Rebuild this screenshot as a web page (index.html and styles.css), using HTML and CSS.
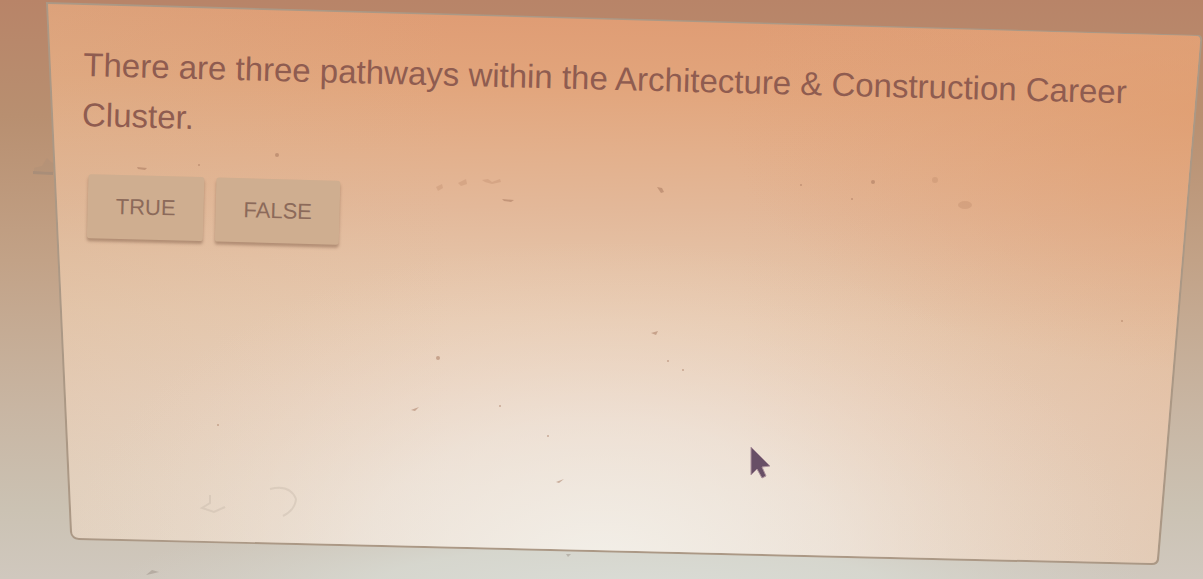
FILE: index.html
```
<!doctype html>
<html lang="en">

<head>
	<meta charset="utf-8" />
	<meta name="viewport" content="width=device-width, initial-scale=1">
	<title>Career Clusters Quiz</title>
	<link rel="stylesheet" href="styles.css">
</head>

<body>

	<main class="screen">

		<svg class="backdrop" viewBox="0 0 1203 579" preserveAspectRatio="none" aria-hidden="true">
			<defs>
				<linearGradient id="wall" x1="0" y1="0" x2="0" y2="1">
					<stop offset="0" stop-color="#b88468" />
					<stop offset="0.2" stop-color="#b88f70" />
					<stop offset="0.45" stop-color="#c2a287" />
					<stop offset="0.7" stop-color="#c8b5a2" />
					<stop offset="0.88" stop-color="#cbc2b3" />
					<stop offset="1" stop-color="#d0c8be" />
				</linearGradient>
				<radialGradient id="floor" gradientUnits="userSpaceOnUse" cx="0" cy="0" r="1" gradientTransform="translate(630 590) scale(520 90)">
					<stop offset="0" stop-color="#dadcd6" />
					<stop offset="0.5" stop-color="#d8dad2" stop-opacity="0.8" />
					<stop offset="1" stop-color="#d4d2c8" stop-opacity="0" />
				</radialGradient>
				<linearGradient id="paper" gradientUnits="userSpaceOnUse" x1="0" y1="0" x2="-12" y2="560">
					<stop offset="0" stop-color="#df9c74" />
					<stop offset="0.13" stop-color="#e2a57c" />
					<stop offset="0.25" stop-color="#e3b08c" />
					<stop offset="0.35" stop-color="#e3b899" />
					<stop offset="0.45" stop-color="#e5c2a6" />
					<stop offset="0.55" stop-color="#e7cab1" />
					<stop offset="0.7" stop-color="#e8d2c0" />
					<stop offset="0.85" stop-color="#e7d9cb" />
					<stop offset="1" stop-color="#e6ddd2" />
				</linearGradient>
				<radialGradient id="glow" gradientUnits="userSpaceOnUse" cx="0" cy="0" r="1" gradientTransform="translate(600 570) scale(540 330)">
					<stop offset="0" stop-color="#f5f3ed" stop-opacity="0.85" />
					<stop offset="0.45" stop-color="#f4ece4" stop-opacity="0.5" />
					<stop offset="1" stop-color="#f0d6c0" stop-opacity="0" />
				</radialGradient>
				<linearGradient id="sides">
					<stop offset="0" stop-color="#d4b28e" stop-opacity="0.25" />
					<stop offset="0.35" stop-color="#d4b28e" stop-opacity="0" />
					<stop offset="0.6" stop-color="#dca880" stop-opacity="0" />
					<stop offset="1" stop-color="#dca880" stop-opacity="0.35" />
				</linearGradient>
				<radialGradient id="corner" gradientUnits="userSpaceOnUse" cx="0" cy="0" r="1" gradientTransform="translate(1203 110) scale(480 260)">
					<stop offset="0" stop-color="#e19c6e" stop-opacity="0.65" />
					<stop offset="1" stop-color="#e1a078" stop-opacity="0" />
				</radialGradient>
			</defs>

			<rect width="1203" height="579" fill="url(#wall)" />
			<rect width="1203" height="579" fill="url(#floor)" />

			<g fill="#8f8278" opacity="0.4">
				<path d="M34 168l8-2 5-8 4 4 6 2v9l-12-2-11 1z" opacity="0.3" />
				<path d="M33 171l20 1v3l-20-1z" />
				<path d="M146 575l6-5 7 2-8 2z" />
				<path d="M566 554l5 0-3 3z" />
			</g>

			<!-- card edge, then the card itself -->
			<path d="M46 2L1199 35Q1203 36 1202 42L1159 560Q1158 565 1152 565L79 540Q71 539 70 532Z" fill="#ab9885" />
			<path d="M48 4L1197 36Q1201 37 1200 42L1157 558Q1157 563 1151 563L79 538Q72 537 72 531Z" fill="url(#paper)" />
			<path d="M48 4L1197 36Q1201 37 1200 42L1157 558Q1157 563 1151 563L79 538Q72 537 72 531Z" fill="url(#sides)" />
			<path d="M48 4L1197 36Q1201 37 1200 42L1157 558Q1157 563 1151 563L79 538Q72 537 72 531Z" fill="url(#corner)" />
			<path d="M48 4L1197 36Q1201 37 1200 42L1157 558Q1157 563 1151 563L79 538Q72 537 72 531Z" fill="url(#glow)" />

			<!-- dust on the glass -->
			<g fill="#a5755c" opacity="0.5">
				<circle cx="277" cy="155" r="2" />
				<circle cx="873" cy="182" r="2" />
				<circle cx="199" cy="165" r="1" />
				<circle cx="801" cy="185" r="1" />
				<circle cx="852" cy="199" r="1" />
				<circle cx="438" cy="358" r="2" />
				<circle cx="548" cy="436" r="1" />
				<circle cx="500" cy="406" r="1" />
				<circle cx="683" cy="370" r="1" />
				<circle cx="668" cy="361" r="1" />
				<circle cx="218" cy="425" r="1" />
				<circle cx="1122" cy="321" r="1" />
				<path d="M137 167l10 1-2 2-7-1z" />
				<path d="M657 187l5 1 2 4-3 1z" />
				<path d="M502 199l12 1-3 2-7-1z" />
				<path d="M651 333l7-2-2 4z" />
				<path d="M411 410l8-3-4 4z" />
				<path d="M556 482l8-3-5 4z" />
			</g>
			<g fill="#b98566" opacity="0.3">
				<path d="M436 187l6-3 1 4-5 3z" />
				<path d="M458 183l8-4 1 5-6 2z" />
				<path d="M482 180l6-1 4 3 8-3 1 3-9 2-7-2z" />
				<circle cx="935" cy="180" r="3" />
				<ellipse cx="965" cy="205" rx="7" ry="4" />
			</g>
			<g fill="none" stroke="#bfb3a2" stroke-width="2" opacity="0.35">
				<path d="M270 489q20-5 26 10-1 11-13 17" />
				<path d="M210 495v8l-8 5 12 4 11-5" />
			</g>
		</svg>

		<form class="question">
			<p class="prompt" id="prompt">There are three pathways within the Architecture &amp; Construction Career Cluster.</p>
			<div class="answers" role="group" aria-labelledby="prompt">
				<button class="answer" type="button">TRUE</button>
				<button class="answer" type="button">FALSE</button>
			</div>
		</form>

		<svg class="pointer" viewBox="0 0 20 34" aria-hidden="true">
			<path d="M1 1v28l6-6 5 9 4-2-4-9 8-1z" fill="#684f66" stroke="#ad929c" stroke-width="1" stroke-linejoin="round" />
		</svg>

	</main>

</body>

</html>
```
FILE: styles.css
```
* {
	box-sizing: border-box;
}

body {
	margin: 0;
	font-family: "Liberation Sans", Arial, sans-serif;
	background: #c8b5a2;
}

.screen {
	position: relative;
	min-height: 100vh;
	padding: 40px 64px 40px 84px;
	overflow: hidden;
}

.backdrop {
	position: absolute;
	top: 0;
	left: 0;
	width: 100%;
	height: 100%;
}

/* the whole card leans a little to the right */
.question {
	position: relative;
	transform: rotate(1.5deg);
	transform-origin: 0 0;
}

.prompt {
	margin: 0;
	color: #8f5c50;
	font-size: 33px;
	line-height: 50px;
}

.answers {
	display: flex;
	gap: 12px;
	padding: 34px 8px 0;
}

.answer {
	height: 64px;
	padding: 0 28px;
	border: 0;
	border-radius: 3px;
	background: #cfae90;
	box-shadow: 0 3px 3px rgba(120, 85, 65, 0.45);
	color: #8c6a5a;
	font-family: inherit;
	font-size: 22px;
	line-height: 32px;
}

.pointer {
	position: absolute;
	top: 77%;
	left: 62%;
	width: 20px;
	height: 34px;
	margin-left: 4px;
}
```
